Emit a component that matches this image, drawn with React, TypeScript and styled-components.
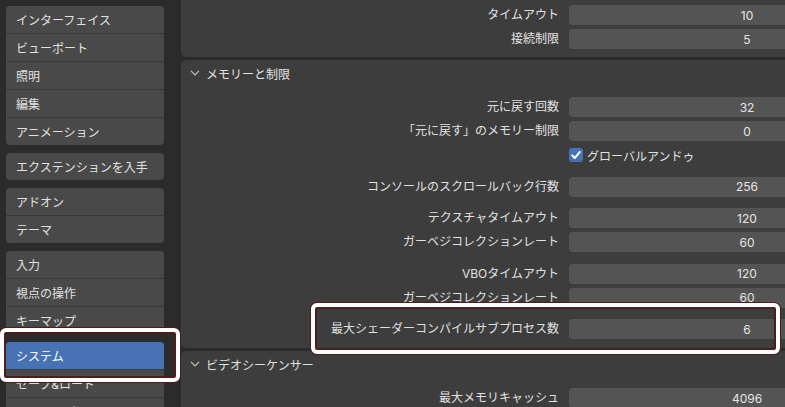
import React from "react";
import styled, { createGlobalStyle } from "styled-components";

const GlobalStyle = createGlobalStyle`
  html, body {
    margin: 0;
    padding: 0;
    background: #2b2b2b;
    overflow: hidden;
  }

  body {
    font-family: Inter, "Noto Sans CJK JP", sans-serif;
    font-size: 12px;
    color: #e1e1e1;
  }
`;

const Window = styled.div`
  position: relative;
  display: flex;
  width: 785px;
  height: 407px;
  overflow: hidden;
  background: #2b2b2b;
`;

const Sidebar = styled.nav`
  width: 170px;
  flex-shrink: 0;
  padding: 6px 0 0 6px;
  box-sizing: border-box;
  display: flex;
  flex-direction: column;
  gap: 8px;
`;

const NavGroup = styled.div`
  width: 158px;
  background: #494949;
  border-radius: 4px;
  overflow: hidden;
  display: flex;
  flex-direction: column;
  flex-shrink: 0;
`;

const NavItem = styled.div<{ $selected?: boolean }>`
  height: 27px;
  padding-left: 10px;
  display: flex;
  align-items: center;
  white-space: nowrap;
  background: ${({ $selected }) => ($selected ? "#4772b3" : "transparent")};
  color: ${({ $selected }) => ($selected ? "#ffffff" : "#e1e1e1")};

  & + & {
    border-top: 1px solid #3a3a3a;
  }
`;

const Main = styled.main`
  flex: 1;
  padding-left: 11px;
  display: flex;
  flex-direction: column;
  gap: 3px;
  overflow: hidden;
`;

const Panel = styled.section<{ $flatTop?: boolean }>`
  width: 760px;
  flex-shrink: 0;
  background: #3d3d3d;
  border-radius: ${({ $flatTop }) => ($flatTop ? "0 0 5px 5px" : "5px")};
`;

const PanelHeader = styled.header`
  height: 26px;
  display: flex;
  align-items: center;
  gap: 6px;
  padding-left: 9px;
`;

const PanelBody = styled.div<{ $top: number; $bottom: number }>`
  padding: ${({ $top, $bottom }) => `${$top}px 16px ${$bottom}px 0`};
`;

const PropGroup = styled.div`
  display: grid;
  grid-template-columns: 378px 1fr;
  column-gap: 10px;
  row-gap: 4px;

  & + & {
    margin-top: 11.5px;
  }
`;

const Label = styled.span`
  text-align: right;
  line-height: 20px;
  white-space: nowrap;
`;

const NumField = styled.div`
  height: 20px;
  background: #545454;
  border-radius: 4px;
  display: flex;
  align-items: center;
  justify-content: center;
  color: #e6e6e6;
`;

const CheckRow = styled.label`
  height: 20px;
  display: flex;
  align-items: center;
  gap: 4px;
`;

const CheckBox = styled.span`
  width: 14px;
  height: 14px;
  border-radius: 3px;
  background: #4772b3;
  display: flex;
  align-items: center;
  justify-content: center;
`;

const Highlight = styled.div`
  position: absolute;
  box-sizing: border-box;
  border: 4px solid #ffffff;
  border-radius: 6px;
  box-shadow: 0 0 0 1px #4b1d1d, inset 0 0 0 2px #4b1d1d;
  pointer-events: none;
`;

const NavHighlight = styled(Highlight)`
  left: 0;
  top: 328px;
  width: 180px;
  height: 54px;
`;

const SettingHighlight = styled(Highlight)`
  left: 311px;
  top: 303px;
  width: 469px;
  height: 51px;
`;

const Chevron = () => (
  <svg width="10" height="6" viewBox="0 0 10 6">
    <path d="M1 0.8 L5 4.8 L9 0.8" fill="none" stroke="#c4c4c4" strokeWidth="1.2" />
  </svg>
);

const Check = () => (
  <svg width="12" height="12" viewBox="0 0 12 12">
    <path d="M2.2 6.4 L4.8 9 L9.8 3" fill="none" stroke="#ffffff" strokeWidth="2" strokeLinecap="round" strokeLinejoin="round" />
  </svg>
);

const navGroups: { label: string; selected?: boolean }[][] = [
  [{ label: "インターフェイス" }, { label: "ビューポート" }, { label: "照明" }, { label: "編集" }, { label: "アニメーション" }],
  [{ label: "エクステンションを入手" }],
  [{ label: "アドオン" }, { label: "テーマ" }],
  [{ label: "入力" }, { label: "視点の操作" }, { label: "キーマップ" }],
  [{ label: "システム", selected: true }, { label: "セーブ&ロード" }, { label: "ファイルパス" }],
];

const Prop: React.FC<{ label: string; value: string }> = ({ label, value }) => (
  <>
    <Label>{label}</Label>
    <NumField>{value}</NumField>
  </>
);

function App() {
  return (
    <Window>
      <GlobalStyle />
      <Sidebar>
        {navGroups.map((group, i) => (
          <NavGroup key={i}>
            {group.map((item) => (
              <NavItem key={item.label} $selected={item.selected}>
                {item.label}
              </NavItem>
            ))}
          </NavGroup>
        ))}
      </Sidebar>

      <Main>
        <Panel $flatTop>
          <PanelBody $top={5} $bottom={8}>
            <PropGroup>
              <Prop label="タイムアウト" value="10" />
              <Prop label="接続制限" value="5" />
            </PropGroup>
          </PanelBody>
        </Panel>

        <Panel>
          <PanelHeader>
            <Chevron />
            <span>メモリーと制限</span>
          </PanelHeader>
          <PanelBody $top={11} $bottom={9}>
            <PropGroup>
              <Prop label="元に戻す回数" value="32" />
              <Prop label="「元に戻す」のメモリー制限" value="0" />
              <span />
              <CheckRow>
                <CheckBox>
                  <Check />
                </CheckBox>
                グローバルアンドゥ
              </CheckRow>
            </PropGroup>
            <PropGroup>
              <Prop label="コンソールのスクロールバック行数" value="256" />
            </PropGroup>
            <PropGroup>
              <Prop label="テクスチャタイムアウト" value="120" />
              <Prop label="ガーベジコレクションレート" value="60" />
            </PropGroup>
            <PropGroup>
              <Prop label="VBOタイムアウト" value="120" />
              <Prop label="ガーベジコレクションレート" value="60" />
            </PropGroup>
            <PropGroup>
              <Prop label="最大シェーダーコンパイルサブプロセス数" value="6" />
            </PropGroup>
          </PanelBody>
        </Panel>

        <Panel>
          <PanelHeader>
            <Chevron />
            <span>ビデオシーケンサー</span>
          </PanelHeader>
          <PanelBody $top={11} $bottom={9}>
            <PropGroup>
              <Prop label="最大メモリキャッシュ" value="4096" />
            </PropGroup>
          </PanelBody>
        </Panel>
      </Main>

      <NavHighlight />
      <SettingHighlight />
    </Window>
  );
}

export default App;
